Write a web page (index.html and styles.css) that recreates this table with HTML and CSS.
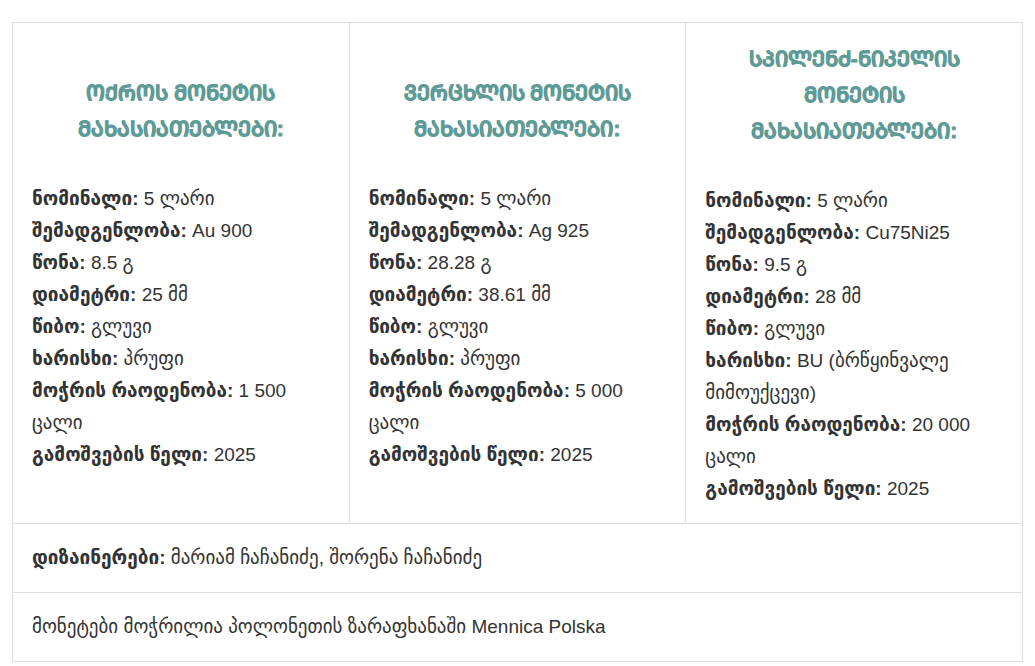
FILE: index.html
```html
<!DOCTYPE html>
<html lang="ka">

<head>
	<meta charset="UTF-8">
	<meta name="viewport" content="width=device-width, initial-scale=1.0">
	<title>მონეტების მახასიათებლები</title>
	<link rel="stylesheet" href="styles.css">
</head>

<body>
	<table class="coins">
		<tr>
			<td>
				<!-- ოქროს მონეტის მახასიათებლები (მთავრული) -->
				<h3 class="coin-title">&#x1C9D;&#x1CA5;&#x1CA0;&#x1C9D;&#x1CA1; &#x1C9B;&#x1C9D;&#x1C9C;&#x1C94;&#x1CA2;&#x1C98;&#x1CA1; &#x1C9B;&#x1C90;&#x1CAE;&#x1C90;&#x1CA1;&#x1C98;&#x1C90;&#x1C97;&#x1C94;&#x1C91;&#x1C9A;&#x1C94;&#x1C91;&#x1C98;:</h3>
				<p class="coin-specs">
					<b>ნომინალი:</b> 5 ლარი<br>
					<b>შემადგენლობა:</b> Au 900<br>
					<b>წონა:</b> 8.5 გ<br>
					<b>დიამეტრი:</b> 25 მმ<br>
					<b>წიბო:</b> გლუვი<br>
					<b>ხარისხი:</b> პრუფი<br>
					<b>მოჭრის რაოდენობა:</b> 1 500 ცალი<br>
					<b>გამოშვების წელი:</b> 2025
				</p>
			</td>
			<td>
				<!-- ვერცხლის მონეტის მახასიათებლები -->
				<h3 class="coin-title">&#x1C95;&#x1C94;&#x1CA0;&#x1CAA;&#x1CAE;&#x1C9A;&#x1C98;&#x1CA1; &#x1C9B;&#x1C9D;&#x1C9C;&#x1C94;&#x1CA2;&#x1C98;&#x1CA1; &#x1C9B;&#x1C90;&#x1CAE;&#x1C90;&#x1CA1;&#x1C98;&#x1C90;&#x1C97;&#x1C94;&#x1C91;&#x1C9A;&#x1C94;&#x1C91;&#x1C98;:</h3>
				<p class="coin-specs">
					<b>ნომინალი:</b> 5 ლარი<br>
					<b>შემადგენლობა:</b> Ag 925<br>
					<b>წონა:</b> 28.28 გ<br>
					<b>დიამეტრი:</b> 38.61 მმ<br>
					<b>წიბო:</b> გლუვი<br>
					<b>ხარისხი:</b> პრუფი<br>
					<b>მოჭრის რაოდენობა:</b> 5 000 ცალი<br>
					<b>გამოშვების წელი:</b> 2025
				</p>
			</td>
			<td>
				<!-- სპილენძ-ნიკელის მონეტის მახასიათებლები -->
				<h3 class="coin-title">&#x1CA1;&#x1C9E;&#x1C98;&#x1C9A;&#x1C94;&#x1C9C;&#x1CAB;-&#x1C9C;&#x1C98;&#x1C99;&#x1C94;&#x1C9A;&#x1C98;&#x1CA1; &#x1C9B;&#x1C9D;&#x1C9C;&#x1C94;&#x1CA2;&#x1C98;&#x1CA1; &#x1C9B;&#x1C90;&#x1CAE;&#x1C90;&#x1CA1;&#x1C98;&#x1C90;&#x1C97;&#x1C94;&#x1C91;&#x1C9A;&#x1C94;&#x1C91;&#x1C98;:</h3>
				<p class="coin-specs">
					<b>ნომინალი:</b> 5 ლარი<br>
					<b>შემადგენლობა:</b> Cu75Ni25<br>
					<b>წონა:</b> 9.5 გ<br>
					<b>დიამეტრი:</b> 28 მმ<br>
					<b>წიბო:</b> გლუვი<br>
					<b>ხარისხი:</b> BU (ბრწყინვალე მიმოუქცევი)<br>
					<b>მოჭრის რაოდენობა:</b> 20 000 ცალი<br>
					<b>გამოშვების წელი:</b> 2025
				</p>
			</td>
		</tr>
		<tr>
			<td colspan="3"><b>დიზაინერები:</b> მარიამ ჩაჩანიძე, შორენა ჩაჩანიძე</td>
		</tr>
		<tr>
			<td colspan="3">მონეტები მოჭრილია პოლონეთის ზარაფხანაში Mennica Polska</td>
		</tr>
	</table>
</body>

</html>
```

FILE: styles.css
```css
body {
	margin: 0;
	padding: 22px 12px 0;
	background: #fff;
	font-family: "Liberation Sans", "DejaVu Sans", sans-serif;
	font-size: 19px;
	line-height: 32px;
	color: #333
}

.coins {
	width: 100%;
	border-collapse: collapse;
	table-layout: fixed
}

.coins td {
	border: 1px solid #ddd;
	padding: 18px 19px;
	vertical-align: middle
}

.coins b {
	font-weight: bold
}

/* заголовок колонки */
.coin-title {
	margin: 0 0 36px;
	font-size: 21px;
	line-height: 36px;
	font-weight: bold;
	text-align: center;
	color: #5e9a96;
	/* у мтаврули нет жирного начертания */
	-webkit-text-stroke: 0.8px #5e9a96
}

.coin-specs {
	margin: 0
}
```
